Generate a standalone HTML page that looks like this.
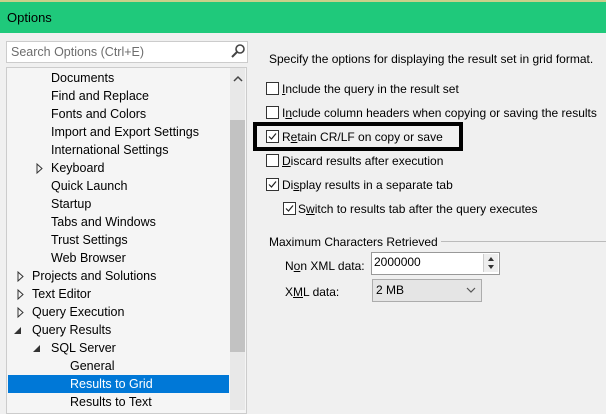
<!DOCTYPE html><html><head><style>
body{margin:0;width:606px;height:410px;overflow:hidden;background:#f0f0f0;font-family:"Liberation Sans",sans-serif;font-size:12px;color:#000;position:relative}
.a{position:absolute;white-space:nowrap}
.cb{position:absolute;width:11px;height:11px;border:1px solid #333;background:#fff}
.cb svg{position:absolute;left:0;top:0}
u{text-decoration:underline}
.r{font-size:12px}
</style></head><body>
<div class="a" style="left:0;top:0;width:606px;height:2px;background:#c9d08a"></div>
<div class="a" style="left:0;top:2px;width:606px;height:31px;background:#1fc97b"></div>
<div class="a" style="left:7px;top:10px;font-size:13px">Options</div>
<div class="a" style="left:6px;top:41px;width:240px;height:20px;background:#fff;border:1px solid #ccc"></div>
<div class="a" style="left:11px;top:45px;color:#6d6d6d;font-size:12.5px">Search Options (Ctrl+E)</div>
<svg class="a" style="left:230px;top:43px" width="16" height="16"><circle cx="10" cy="6" r="4" fill="none" stroke="#444" stroke-width="1.6"/><line x1="7" y1="9" x2="2" y2="14" stroke="#444" stroke-width="2"/></svg>
<div class="a" style="left:6px;top:67px;width:239px;height:345px;background:#f5f5f5;border:1px solid #ccc"></div>
<div class="a" style="left:230px;top:68px;width:15px;height:342px;background:#e8e8e8"></div>
<div class="a" style="left:230px;top:120px;width:15px;height:232px;background:#c2c2c2"></div>
<svg class="a" style="left:232px;top:74px" width="12" height="10"><polyline points="2,7 6,3 10,7" fill="none" stroke="#444" stroke-width="1.5"/></svg>
<div class="a" style="left:8px;top:375px;width:221px;height:18px;background:#0078d7"></div>
<div style="font-size:12.5px">
<div class="a" style="left:51px;top:71px">Documents</div>
<div class="a" style="left:51px;top:89px">Find and Replace</div>
<div class="a" style="left:51px;top:107px">Fonts and Colors</div>
<div class="a" style="left:51px;top:125px">Import and Export Settings</div>
<div class="a" style="left:51px;top:143px">International Settings</div>
<div class="a" style="left:51px;top:161px">Keyboard</div>
<div class="a" style="left:51px;top:179px">Quick Launch</div>
<div class="a" style="left:51px;top:197px">Startup</div>
<div class="a" style="left:51px;top:215px">Tabs and Windows</div>
<div class="a" style="left:51px;top:233px">Trust Settings</div>
<div class="a" style="left:51px;top:251px">Web Browser</div>
<div class="a" style="left:32px;top:269px">Projects and Solutions</div>
<div class="a" style="left:32px;top:287px">Text Editor</div>
<div class="a" style="left:32px;top:305px">Query Execution</div>
<div class="a" style="left:32px;top:323px">Query Results</div>
<div class="a" style="left:51px;top:341px">SQL Server</div>
<div class="a" style="left:70px;top:359px">General</div>
<div class="a" style="left:70px;top:377px;color:#fff">Results to Grid</div>
<div class="a" style="left:70px;top:395px">Results to Text</div>
</div>
<svg class="a" style="left:0;top:0" width="60" height="410">
<polygon points="37,164 37,173 42,168.5" fill="none" stroke="#333"/>
<polygon points="18,272 18,281 23,276.5" fill="none" stroke="#333"/>
<polygon points="18,290 18,299 23,294.5" fill="none" stroke="#333"/>
<polygon points="18,308 18,317 23,312.5" fill="none" stroke="#333"/>
<polygon points="21,327 21,334 14,334" fill="#333"/>
<polygon points="40,345 40,352 33,352" fill="#333"/>
</svg>
<div class="a r" style="left:269px;top:52px">Specify the options for displaying the result set in grid format.</div>
<div class="cb" style="left:266px;top:82px"></div><div class="a r" style="left:282px;top:82px"><u>I</u>nclude the query in the result set</div>
<div class="cb" style="left:266px;top:106px"></div><div class="a r" style="left:282px;top:106px">I<u>n</u>clude column headers when copying or saving the results</div>
<div class="cb" style="left:266px;top:130px"><svg width="11" height="11"><polyline points="2,5.5 4.5,8 9,2.5" fill="none" stroke="#222" stroke-width="1.2"/></svg></div><div class="a r" style="left:282px;top:130px">R<u>e</u>tain CR/LF on copy or save</div>
<div class="a" style="left:253px;top:122px;width:202px;height:21px;border:4px solid #000"></div>
<div class="cb" style="left:266px;top:154px"></div><div class="a r" style="left:282px;top:154px"><u>D</u>iscard results after execution</div>
<div class="cb" style="left:266px;top:178px"><svg width="11" height="11"><polyline points="2,5.5 4.5,8 9,2.5" fill="none" stroke="#222" stroke-width="1.2"/></svg></div><div class="a r" style="left:282px;top:178px">Di<u>s</u>play results in a separate tab</div>
<div class="cb" style="left:283px;top:202px"><svg width="11" height="11"><polyline points="2,5.5 4.5,8 9,2.5" fill="none" stroke="#222" stroke-width="1.2"/></svg></div><div class="a r" style="left:298px;top:202px">S<u>w</u>itch to results tab after the query executes</div>
<div class="a r" style="left:269px;top:235px">Maximum Characters Retrieved</div>
<div class="a" style="left:441px;top:241px;width:165px;height:1px;background:#bbb"></div>
<div class="a r" style="left:285px;top:259px">N<u>o</u>n XML data:</div>
<div class="a" style="left:371px;top:252px;width:127px;height:21px;background:#fff;border:1px solid #999"></div>
<div class="a r" style="left:374px;top:255px">2000000</div>
<div class="a" style="left:483px;top:254px;width:14px;height:18px;background:#eee;border-left:1px solid #ccc"></div>
<svg class="a" style="left:485px;top:255px" width="12" height="16"><polygon points="3,6 9,6 6,2" fill="#333"/><polygon points="3,10 9,10 6,14" fill="#333"/></svg>
<div class="a r" style="left:285px;top:285px">X<u>M</u>L data:</div>
<div class="a" style="left:372px;top:279px;width:108px;height:21px;background:#e5e5e5;border:1px solid #acacac"></div>
<div class="a r" style="left:376px;top:283px">2 MB</div>
<svg class="a" style="left:466px;top:286px" width="10" height="8"><polyline points="1,2 5,6 9,2" fill="none" stroke="#555" stroke-width="1.2"/></svg>
</body></html>
